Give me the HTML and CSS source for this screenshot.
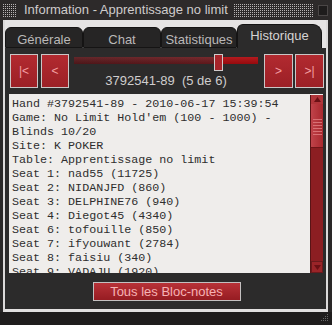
FILE: index.html
```html
<!DOCTYPE html>
<html>
<head>
<meta charset="utf-8">
<link rel="stylesheet" href="styles.css">
</head>
<body>
<div class="window">
  <div class="titlebar">
    <div class="dots dots-left"></div>
    <div class="title">Information - Apprentissage no limit</div>
    <div class="dots dots-right"></div>
    <div class="closebox"></div>
  </div>
  <div class="frame">
    <div class="tabs">
      <div class="tab tab-gen">Générale</div>
      <div class="tab tab-chat">Chat</div>
      <div class="tab tab-stats">Statistiques</div>
      <div class="tab tab-hist active">Historique</div>
      <div class="tab-fill"></div>
    </div>
    <div class="panel">
      <div class="navrow">
        <div class="navbtn first">|&lt;</div>
        <div class="navbtn prev">&lt;</div>
        <div class="slider">
          <div class="track"><div class="thumb"></div></div>
          <div class="handno">3792541-89  (5 de 6)</div>
        </div>
        <div class="navbtn next">&gt;</div>
        <div class="navbtn last">&gt;|</div>
      </div>
      <div class="history">
        <pre class="log">Hand #3792541-89 - 2010-06-17 15:39:54
Game: No Limit Hold'em (100 - 1000) -
Blinds 10/20
Site: K POKER
Table: Apprentissage no limit
Seat 1: nad55 (11725)
Seat 2: NIDANJFD (860)
Seat 3: DELPHINE76 (940)
Seat 4: Diegot45 (4340)
Seat 6: tofouille (850)
Seat 7: ifyouwant (2784)
Seat 8: faisiu (340)
Seat 9: VADAJU (1920)</pre>
        <div class="scrollbar">
          <div class="sb-btn sb-up"><svg width="7" height="5" viewBox="0 0 7 5"><polygon points="0,5 3.5,0 7,5" fill="#6a1014"/></svg></div>
          <div class="sb-thumb"><div class="grip"></div></div>
          <div class="sb-track"></div>
          <div class="sb-btn sb-down"><svg width="7" height="5" viewBox="0 0 7 5"><polygon points="0,0 3.5,5 7,0" fill="#6a1014"/></svg></div>
        </div>
      </div>
      <div class="footer">
        <div class="notesbtn">Tous les Bloc-notes</div>
      </div>
    </div>
  </div>
  <div class="bottombar">
    <svg class="resize" width="8" height="8" viewBox="0 0 8 8">
      <rect x="6" y="0" width="1" height="1" fill="#666"/>
      <rect x="4" y="2" width="1" height="1" fill="#666"/>
      <rect x="6" y="2" width="1" height="1" fill="#666"/>
      <rect x="2" y="4" width="1" height="1" fill="#666"/>
      <rect x="4" y="4" width="1" height="1" fill="#666"/>
      <rect x="6" y="4" width="1" height="1" fill="#666"/>
      <rect x="0" y="6" width="1" height="1" fill="#666"/>
      <rect x="2" y="6" width="1" height="1" fill="#666"/>
      <rect x="4" y="6" width="1" height="1" fill="#666"/>
      <rect x="6" y="6" width="1" height="1" fill="#666"/>
    </svg>
  </div>
</div>
</body>
</html>
```

FILE: styles.css
```css
* { box-sizing: border-box; }
html, body { margin: 0; padding: 0; }
body {
  width: 332px;
  height: 325px;
  background: #242222;
  font-family: "Liberation Sans", Arial, sans-serif;
  font-size: 13px;
  overflow: hidden;
}
.window {
  width: 332px;
  height: 325px;
  display: flex;
  flex-direction: column;
  background: #2a2828;
}
.titlebar {
  height: 20px;
  flex: none;
  display: flex;
  align-items: center;
  padding: 0 4px 0 3px;
  background: #2d2a2a;
}
.dots {
  height: 13px;
  background-color: #b8b4b4;
  background-image:
    linear-gradient(to right, transparent 1px, #2d2a2a 1px),
    linear-gradient(to bottom, transparent 1px, #2d2a2a 1px);
  background-size: 2px 2px, 2px 2px;
  margin-top: 1px;
}
.dots-left { width: 14px; }
.dots-right { flex: 1; margin-left: 6px; margin-right: 4px; }
.title {
  color: #cfcccc;
  line-height: 20px;
  margin-left: 7px;
  white-space: nowrap;
}
.closebox {
  width: 10px;
  height: 11px;
  border: 1px solid #4a4646;
  background: #1e1c1c;
  margin-top: 1px;
}
.frame {
  flex: none;
  height: 292px;
  margin: 0 4px 0 3px;
  border-left: 2px solid #dcdada;
  border-right: 2px solid #dcdada;
  border-bottom: 3px solid #e2e0e0;
  display: flex;
  flex-direction: column;
}
.tabs {
  height: 28px;
  flex: none;
  display: flex;
  align-items: flex-end;
  background: #e6e4e4;
}
.tab {
  height: 21px;
  background: #262525;
  border: 1px solid #151414;
  border-radius: 6px 6px 0 0;
  color: #bab8b8;
  text-align: center;
  line-height: 21px;
  padding-top: 1px;
}
.tab-gen { width: 78px; }
.tab-chat { width: 78px; }
.tab-stats { width: 76px; }
.tab-hist { width: 85px; }
.tab.active {
  height: 24px;
  background: #2c2b2b;
  border-bottom: none;
  border-radius: 6px 9px 0 0;
  color: #d6d4d4;
  line-height: 22px;
  padding-top: 0;
}
.tab-fill {
  flex: 1;
  align-self: stretch;
}
.panel {
  flex: 1;
  background: #2c2b2b;
  padding: 6px 2px 0 4px;
  display: flex;
  flex-direction: column;
}
.navrow {
  height: 34px;
  flex: none;
  display: flex;
  padding-left: 1px;
}
.navbtn {
  width: 28px;
  height: 34px;
  border: 1px solid #cbc6c6;
  background: linear-gradient(to bottom, #b22a30, #9c2026);
  color: #f4a0a4;
  font-size: 12px;
  line-height: 32px;
  text-align: center;
}
.navbtn.prev { margin-left: 3px; }
.navbtn.next { width: 29px; }
.navbtn.last { width: 29px; margin-left: 2px; }
.slider {
  flex: 1;
  margin: 0 6px 0 5px;
  display: flex;
  flex-direction: column;
  align-items: center;
}
.track {
  align-self: stretch;
  height: 10px;
  margin-top: 3px;
  position: relative;
  background:
    linear-gradient(to bottom, rgba(255,255,255,0.06), rgba(0,0,0,0.15)),
    linear-gradient(to right, #5a1a1d 0, #6e1c20 140px, #b00c10 140px);
}
.thumb {
  position: absolute;
  left: 140px;
  top: -3px;
  width: 9px;
  height: 17px;
  border: 1px solid #cfcaca;
  background: #a8242a;
}
.handno {
  margin-top: 9px;
  color: #cfcdcd;
  white-space: pre;
  line-height: 15px;
}
.history {
  margin-top: 6px;
  margin-right: 1px;
  height: 179px;
  flex: none;
  background: #efedeb;
  display: flex;
  overflow: hidden;
}
.log {
  flex: 1;
  margin: 0;
  padding: 3px 0 0 3px;
  font-family: "Liberation Mono", "Courier New", monospace;
  font-size: 11.7px;
  line-height: 14px;
  color: #2e2e2e;
  overflow: hidden;
  white-space: pre;
}
.scrollbar {
  width: 13px;
  flex: none;
  margin: 1px 0 0 0;
  display: flex;
  flex-direction: column;
  border-left: 1px solid #5a1416;
  background: #8c1e22;
}
.sb-btn {
  height: 10px;
  display: flex;
  align-items: center;
  justify-content: center;
  background: #b0353a;
}
.sb-up { height: 9px; }
.sb-down {
  height: 12px;
  border: 1px solid #6a1a1c;
  background: #9a2428;
}
.sb-thumb {
  height: 44px;
  background: linear-gradient(to right, #c0434a, #a9282e);
  display: flex;
  align-items: center;
  justify-content: center;
  border-bottom: 1px solid #701418;
}
.grip {
  width: 9px;
  height: 16px;
  margin-top: 2px;
  background: repeating-linear-gradient(to bottom, #d87074 0 1px, transparent 1px 3px);
}
.sb-track { flex: 1; }
.footer {
  margin-top: 9px;
  display: flex;
  justify-content: center;
}
.notesbtn {
  width: 148px;
  height: 19px;
  border: 1px solid #c4c0c0;
  background: linear-gradient(to bottom, #b83238, #961c22);
  color: #f6b2b4;
  text-align: center;
  line-height: 17px;
}
.bottombar {
  flex: 1;
  background: #1f1d1d;
  display: flex;
  justify-content: flex-end;
  align-items: flex-end;
  padding: 0 3px 3px 0;
}
```
